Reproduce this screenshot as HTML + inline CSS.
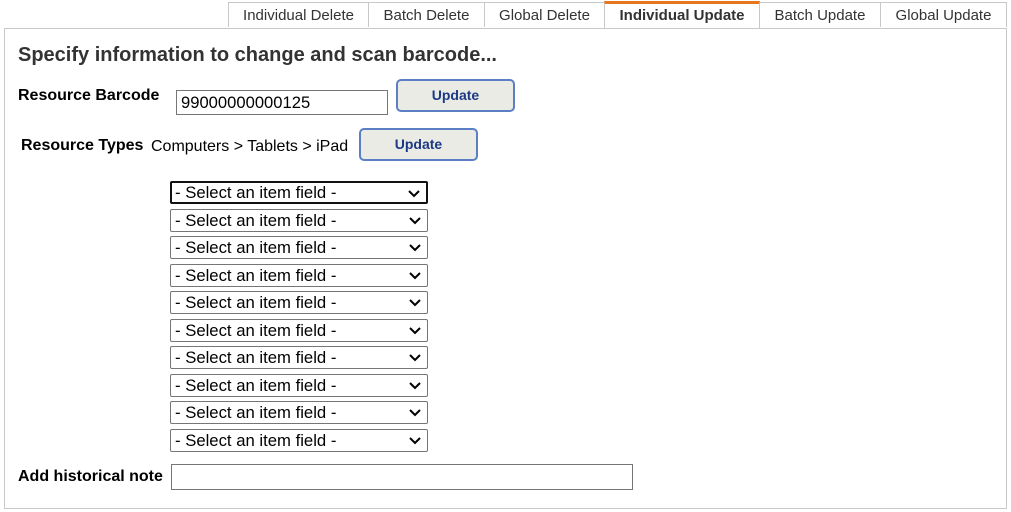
<!DOCTYPE html>
<html><head><style>
body{margin:0;width:1011px;height:512px;background:#fff;font-family:"Liberation Sans",Arial,sans-serif;position:relative;overflow:hidden;color:#000}
.tab{position:absolute;top:2px;height:25px;border:1px solid #c8c8c8;border-bottom:none;background:#fff;font-size:15px;color:#333;text-align:center;line-height:25px;box-sizing:border-box}
.act{border-top:3px solid #e8761c;font-weight:bold;line-height:24px;height:27px;top:1px;background:#fff;z-index:2}
.box{position:absolute;left:4px;top:28px;width:1003px;height:481px;border:1px solid #c8c8c8;box-sizing:border-box}
.a{position:absolute;white-space:nowrap}
.btn{position:absolute;background:#ebebe6;border:2px solid #5a7fc4;border-radius:5px;color:#1c3a84;font-weight:bold;font-size:14px;text-align:center;box-sizing:border-box}
.sel{position:absolute;left:170px;width:258px;height:23px;border:1px solid #767676;border-radius:2px;box-sizing:border-box;font-size:16.7px;line-height:21px;padding-left:4px}
.sel svg{position:absolute;right:6px;top:7px}
</style></head><body>
<div class="tab" style="left:228px;width:141px">Individual Delete</div>
<div class="tab" style="left:368px;width:117px">Batch Delete</div>
<div class="tab" style="left:484px;width:121px">Global Delete</div>
<div class="tab act" style="left:604px;width:156px">Individual Update</div>
<div class="tab" style="left:759px;width:122px">Batch Update</div>
<div class="tab" style="left:880px;width:127px">Global Update</div>
<div class="box"></div>
<div class="a" style="left:18px;top:44px;font-size:20px;font-weight:bold;color:#333">Specify information to change and scan barcode...</div>
<div class="a" style="left:18px;top:87px;font-size:16px;font-weight:bold">Resource Barcode</div>
<div class="a" style="left:176px;top:90px;width:212px;height:25px;border:1px solid #767676;box-sizing:border-box;font-size:16.6px;line-height:23px;padding-left:4px">99000000000125</div>
<div class="btn" style="left:396px;top:79px;width:119px;height:33px;line-height:29px">Update</div>
<div class="a" style="left:21px;top:137px;font-size:16px;font-weight:bold">Resource Types</div>
<div class="a" style="left:151px;top:138px;font-size:16px">Computers &gt; Tablets &gt; iPad</div>
<div class="btn" style="left:359px;top:128px;width:119px;height:33px;line-height:29px">Update</div>
<div class="sel" style="top:181px;border:2px solid #111;line-height:19px;padding-left:3px">- Select an item field -<svg width="12" height="8"><path d="M1 1l5 5 5-5" stroke="#000" stroke-width="2" fill="none"/></svg></div>
<div class="sel" style="top:209px">- Select an item field -<svg width="12" height="8"><path d="M1 1l5 5 5-5" stroke="#000" stroke-width="2" fill="none"/></svg></div>
<div class="sel" style="top:236px">- Select an item field -<svg width="12" height="8"><path d="M1 1l5 5 5-5" stroke="#000" stroke-width="2" fill="none"/></svg></div>
<div class="sel" style="top:264px">- Select an item field -<svg width="12" height="8"><path d="M1 1l5 5 5-5" stroke="#000" stroke-width="2" fill="none"/></svg></div>
<div class="sel" style="top:291px">- Select an item field -<svg width="12" height="8"><path d="M1 1l5 5 5-5" stroke="#000" stroke-width="2" fill="none"/></svg></div>
<div class="sel" style="top:319px">- Select an item field -<svg width="12" height="8"><path d="M1 1l5 5 5-5" stroke="#000" stroke-width="2" fill="none"/></svg></div>
<div class="sel" style="top:346px">- Select an item field -<svg width="12" height="8"><path d="M1 1l5 5 5-5" stroke="#000" stroke-width="2" fill="none"/></svg></div>
<div class="sel" style="top:374px">- Select an item field -<svg width="12" height="8"><path d="M1 1l5 5 5-5" stroke="#000" stroke-width="2" fill="none"/></svg></div>
<div class="sel" style="top:401px">- Select an item field -<svg width="12" height="8"><path d="M1 1l5 5 5-5" stroke="#000" stroke-width="2" fill="none"/></svg></div>
<div class="sel" style="top:429px">- Select an item field -<svg width="12" height="8"><path d="M1 1l5 5 5-5" stroke="#000" stroke-width="2" fill="none"/></svg></div>
<div class="a" style="left:18px;top:468px;font-size:16px;font-weight:bold">Add historical note</div>
<div class="a" style="left:171px;top:464px;width:462px;height:26px;border:1px solid #767676;box-sizing:border-box"></div>
</body></html>
